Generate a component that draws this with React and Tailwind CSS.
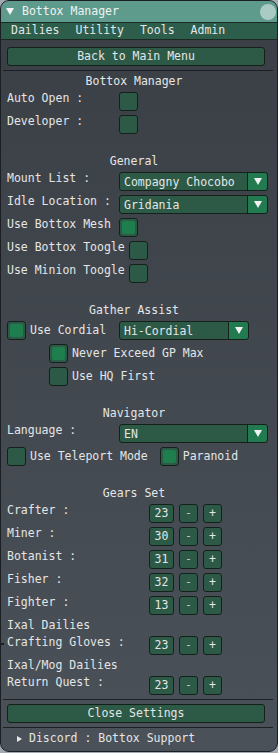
import React from "react";

const Box = ({ checked }) => (
  <div className="w-[19px] h-[19px] shrink-0 rounded-[3px] border border-[#14201a] bg-[#2d5a47] flex items-center justify-center">
    {checked && <div className="w-[13px] h-[13px] rounded-[2px] bg-[#1e7e4e]" />}
  </div>
);

const Down = () => (
  <svg width="8" height="7" viewBox="0 0 8 7">
    <path d="M0 0 H8 L4 7 Z" fill="#f2f2f2" />
  </svg>
);

const Combo = ({ value, w = "w-[149px]" }) => (
  <div className={`${w} h-[19px] flex rounded-[3px] border border-[#14201a] bg-[#2d5a47]`}>
    <span className="flex-1 pl-[4px] leading-[18px]">{value}</span>
    <div className="w-[20px] flex items-center justify-center bg-[#217a50] border-l border-[#14201a] rounded-r-[3px]">
      <Down />
    </div>
  </div>
);

const Btn = ({ children, w }) => (
  <div className={`${w} h-[19px] flex items-center justify-center rounded-[3px] border border-[#14201a] bg-[#2d5a47]`}>
    {children}
  </div>
);

const Heading = ({ children }) => (
  <div className="h-[13px] leading-[13px] text-center pr-[8px]">{children}</div>
);

const Spacer = () => <div className="h-[13px]" />;

const Sep = () => <div className="h-px -mx-[4px] bg-[#1c2024]" />;

const LabelBox = ({ label, checked, minW = "min-w-[108px]" }) => (
  <div className="h-[19px] flex gap-[4px]">
    <span className={`${minW} leading-[13px]`}>{label}</span>
    <Box checked={checked} />
  </div>
);

const BoxLabel = ({ label, checked }) => (
  <div className="flex items-center gap-[4px]">
    <Box checked={checked} />
    <span>{label}</span>
  </div>
);

const Gear = ({ label, value }) => (
  <div className="h-[19px] flex">
    <span className="w-[142px] leading-[13px]">{label}</span>
    <div className="flex gap-[5px]">
      <Btn w="w-[25px]">{value}</Btn>
      <Btn w="w-[19px]">
        <span className="text-[#b9c4bf]">-</span>
      </Btn>
      <Btn w="w-[19px]">+</Btn>
    </div>
  </div>
);

export default function App() {
  return (
    <div className="w-[278px] h-[753px] bg-[#a3a9b2] font-['DejaVu_Sans_Mono',monospace] text-[11.5px] text-[#e4e6e6]">
      <div className="relative h-[752px] flex flex-col rounded-[9px] border border-[#1b1f23] overflow-hidden bg-gradient-to-b from-[#3a3f46] to-[#4b5158]">
        {/* Title bar */}
        <div className="h-[21px] shrink-0 flex items-center bg-[#5f9b8d] pl-[5px] pr-[1px]">
          <svg width="8" height="7" viewBox="0 0 8 7" className="mr-[8px]">
            <path d="M0 0 H8 L4 7 Z" fill="#f4f4f4" />
          </svg>
          <span className="flex-1 text-[#eef3f2]">Bottox Manager</span>
          <div className="w-[16px] h-[16px] rounded-full bg-[#a9cbc3]" />
        </div>

        {/* Menu bar */}
        <div className="h-[18px] shrink-0 flex items-center gap-[16px] pl-[10px] bg-[#2d5e4c] border-y border-[#1c2a24]">
          <span>Dailies</span>
          <span>Utility</span>
          <span>Tools</span>
          <span>Admin</span>
        </div>

        {/* Content */}
        <div className="flex flex-col gap-[4px] pl-[6px] pr-[8px] pt-[7px]">
          <Btn w="w-[258px]">Back to Main Menu</Btn>
          <Sep />
          <Heading>Bottox Manager</Heading>
          <LabelBox label="Auto Open :" />
          <LabelBox label="Developer :" />
          <Spacer />
          <Heading>General</Heading>
          <div className="h-[19px] flex gap-[4px]">
            <span className="min-w-[108px] leading-[13px]">Mount List :</span>
            <Combo value="Compagny Chocobo" />
          </div>
          <div className="h-[19px] flex gap-[4px]">
            <span className="min-w-[108px] leading-[13px]">Idle Location :</span>
            <Combo value="Gridania" />
          </div>
          <LabelBox label="Use Bottox Mesh" checked />
          <LabelBox label="Use Bottox Toogle" />
          <LabelBox label="Use Minion Toogle" />
          <Spacer />
          <Heading>Gather Assist</Heading>
          <div className="h-[19px] flex gap-[4px]">
            <div className="w-[108px]">
              <BoxLabel label="Use Cordial" checked />
            </div>
            <Combo value="Hi-Cordial" w="w-[130px]" />
          </div>
          <div className="ml-[42px]">
            <BoxLabel label="Never Exceed GP Max" checked />
          </div>
          <div className="ml-[42px]">
            <BoxLabel label="Use HQ First" />
          </div>
          <Spacer />
          <Heading>Navigator</Heading>
          <div className="h-[19px] flex gap-[4px]">
            <span className="min-w-[108px] leading-[13px]">Language :</span>
            <Combo value="EN" />
          </div>
          <div className="flex gap-[12px]">
            <BoxLabel label="Use Teleport Mode" />
            <BoxLabel label="Paranoid" checked />
          </div>
          <Spacer />
          <Heading>Gears Set</Heading>
          <Gear label="Crafter :" value="23" />
          <Gear label="Miner :" value="30" />
          <Gear label="Botanist :" value="31" />
          <Gear label="Fisher :" value="32" />
          <Gear label="Fighter :" value="13" />
          <div className="h-[13px] leading-[13px]">Ixal Dailies</div>
          <Gear label="Crafting Gloves :" value="23" />
          <div className="h-[13px] leading-[13px]">Ixal/Mog Dailies</div>
          <Gear label="Return Quest :" value="23" />
          <Sep />
          <Btn w="w-[258px]">Close Settings</Btn>
          <Sep />
          <div className="h-[13px] flex items-center gap-[7px] pl-[10px]">
            <svg width="5" height="6" viewBox="0 0 5 6">
              <path d="M0 0 L5 3 L0 6 Z" fill="#e8e8e8" />
            </svg>
            <span>Discord : Bottox Support</span>
          </div>
        </div>
        <div className="absolute left-0 top-[642px] w-[3px] h-[2px] bg-[#1b1f23]" />
      </div>
    </div>
  );
}
